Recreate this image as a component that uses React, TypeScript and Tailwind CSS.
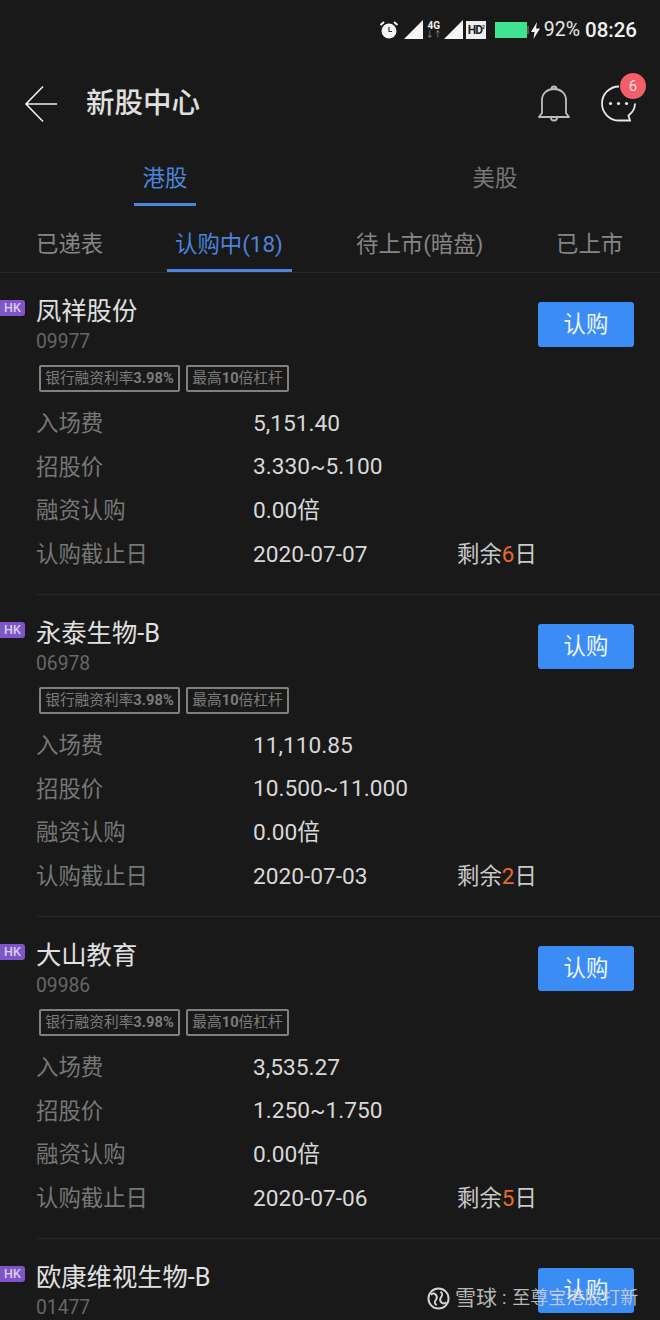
const FONT = "font-['Roboto','Noto_Sans_CJK_SC',sans-serif]";

interface Stock {
  name: string;
  code: string;
  fee?: string;
  price?: string;
  deadline?: string;
  days?: string;
}

const stocks: Stock[] = [
  { name: "凤祥股份", code: "09977", fee: "5,151.40", price: "3.330~5.100", deadline: "2020-07-07", days: "6" },
  { name: "永泰生物-B", code: "06978", fee: "11,110.85", price: "10.500~11.000", deadline: "2020-07-03", days: "2" },
  { name: "大山教育", code: "09986", fee: "3,535.27", price: "1.250~1.750", deadline: "2020-07-06", days: "5" },
  { name: "欧康维视生物-B", code: "01477" },
];

function StatusBar() {
  return (
    <div className="flex h-[60px] items-center justify-end pr-[23px] text-[#f2f2f2]">
      {/* alarm */}
      <svg width="20" height="20" viewBox="0 0 20 20" className="mr-[5px]">
        <circle cx="10" cy="11" r="7.500" fill="#f5f5f5" />
        <path d="M10 7v4.500h3" stroke="#333" strokeWidth="1.200" fill="none" />
        <path d="M1.500 5 5 2M18.500 5 15 2" stroke="#f5f5f5" strokeWidth="2" />
      </svg>
      <svg width="20" height="20" viewBox="0 0 20 20" className="mr-[3px]">
        <path d="M0 19 19 0v19z" fill="#f5f5f5" />
      </svg>
      <div className="mr-[3px] flex w-[14px] flex-col items-center text-[10px] font-bold leading-[10px]">
        <span>4G</span>
        <span className="text-[8px] leading-[8px] text-[#777]">↓↑</span>
      </div>
      <svg width="20" height="20" viewBox="0 0 20 20" className="mr-[2px]">
        <path d="M0 19 19 0v19z" fill="#f5f5f5" />
      </svg>
      <div className="mr-[9px] flex h-[18px] w-[20px] items-start justify-center bg-[#eeeeee] pt-[2px] text-[12px] font-bold leading-[14px] tracking-[-1px] text-[#222]">
        HD<span className="text-[5px] leading-[8px]">2</span>
      </div>
      <div className="h-[16px] w-[32px] bg-[#3ee28f]" />
      <div className="mr-[2px] h-[8px] w-[2px] bg-[#555]" />
      <svg width="9" height="17" viewBox="0 0 9 17" className="mr-[4px]">
        <path d="M6 0 0 10h3.500L2.500 17 9 6.500H5z" fill="#f5f5f5" />
      </svg>
      <span className="mr-[5px] text-[19.5px] text-[#e8e8e8]">92%</span>
      <span className="text-[20.5px] font-medium">08:26</span>
    </div>
  );
}

function Header() {
  return (
    <div className="flex h-[88px] items-center pl-[24px] pr-[22px]">
      <svg width="34" height="38" viewBox="0 0 34 38" fill="none" stroke="#f0f0f0" strokeWidth="1.600">
        <path d="M19 1.500 2 19l17 17.500M2 19h31" />
      </svg>
      <div className="ml-[28px] flex-1 pt-[1px] text-[28.5px] font-medium text-[#e0e0e0]">新股中心</div>
      <svg width="36" height="38" viewBox="0 0 36 38" fill="none" stroke="#bdbdbd" strokeWidth="1.800" className="mr-[28px]">
        <path d="M3 32h30l-3-4V15C30 8.500 25 4 18 4S6 8.500 6 15v13z" strokeLinejoin="round" />
        <path d="M15.500 4a2.500 2.500 0 0 1 5 0M15 33a3 2.500 0 0 0 6 0" />
      </svg>
      <div className="relative">
        <svg width="38" height="38" viewBox="0 0 38 38" fill="none">
          <path d="M19 1.500A17 17 0 1 0 19 35.500h11l-1.500-5c4-3 6.500-6.500 6.500-12" stroke="#e8e8e8" strokeWidth="1.800" />
          <circle cx="10.500" cy="18.500" r="1.600" fill="#e8e8e8" />
          <circle cx="18.500" cy="18.500" r="1.600" fill="#e8e8e8" />
          <circle cx="26.500" cy="18.500" r="1.600" fill="#e8e8e8" />
        </svg>
        <div className="absolute left-[20px] top-[-12px] flex h-[26px] w-[26px] items-center justify-center rounded-full bg-[#f25f68] text-[15px] text-[#f6dcdc]">
          6
        </div>
      </div>
    </div>
  );
}

function Tabs() {
  return (
    <div>
      <div className="flex h-[58px]">
        <div className="flex w-[330px] justify-center">
          <div className="flex h-[58px] w-[62px] flex-col items-center justify-between pt-[14px] text-[22.4px] leading-[32px] text-[#4a84dd]">
            <span>港股</span>
            <div className="h-[3px] w-full bg-[#4a84dd]" />
          </div>
        </div>
        <div className="flex w-[330px] justify-center pt-[14px] text-[22.4px] leading-[32px] text-[#777777]">美股</div>
      </div>
      <div className="flex h-[67px] border-b border-[#262626] pl-[36px] pt-[22px] text-[22.4px] leading-[32px] text-[#858585]">
        <span className="w-[139px]">已递表</span>
        <div className="relative mr-[73px] w-[108px] text-[#4a84dd]">
          <span className="whitespace-nowrap">认购中(18)</span>
          <div className="absolute bottom-0 left-[-8px] h-[3px] w-[125px] bg-[#4a84dd]" />
        </div>
        <span className="w-[200px] whitespace-nowrap">待上市(暗盘)</span>
        <span className="whitespace-nowrap">已上市</span>
      </div>
    </div>
  );
}

function InfoRow({ label, value, children }: { label: string; value?: string; children?: React.ReactNode }) {
  return (
    <div className="flex h-[43.6px] items-center text-[22.4px]">
      <span className="w-[217px] text-[#777777]">{label}</span>
      <span className="w-[204px] text-[22.7px] text-[#d8d8d8]">{value}</span>
      {children}
    </div>
  );
}

function StockCard({ stock }: { stock: Stock }) {
  return (
    <div className="relative pl-[36px]">
      <div className="absolute left-0 top-[27px] flex h-[16px] w-[25px] items-center justify-center rounded-r-[3px] bg-[#7f55c9] text-[12.5px] font-medium text-[#d9d0ee]">
        HK
      </div>
      <div className="h-[322px] border-b border-[#262626] pr-[26px]">
        <div className="flex items-start justify-between">
          <div className="pt-[21px]">
            <div className="text-[25.3px] leading-[36px] text-[#e0e0e0]">{stock.name}</div>
            <div className="mt-[-1px] text-[19.3px] leading-[26px] text-[#666666]">{stock.code}</div>
          </div>
          <button className="mt-[29px] h-[45px] w-[96px] rounded-[3px] bg-[#3b8df5] text-[22.4px] text-[#eef5ff]">认购</button>
        </div>
        {stock.fee ? (
          <>
            <div className="ml-[3px] mt-[10px] flex gap-[6px]">
              <div className="flex h-[27px] w-[141px] items-center justify-center whitespace-nowrap rounded-[2px] border-2 border-[#808080] text-[14.7px] text-[#7c7c7c]">
                银行融资利率<b>3.98%</b>
              </div>
              <div className="flex h-[27px] w-[103px] items-center justify-center whitespace-nowrap rounded-[2px] border-2 border-[#808080] text-[14.7px] text-[#7c7c7c]">
                最高<b>10</b>倍杠杆
              </div>
            </div>
            <div className="mt-[10px]">
              <InfoRow label="入场费" value={stock.fee} />
              <InfoRow label="招股价" value={stock.price} />
              <InfoRow label="融资认购" value="0.00倍" />
              <InfoRow label="认购截止日" value={stock.deadline}>
                <span className="whitespace-nowrap text-[#c8c8c8]">
                  剩余<span className="text-[#ea6a2c]">{stock.days}</span>日
                </span>
              </InfoRow>
            </div>
          </>
        ) : null}
      </div>
    </div>
  );
}

export default function App() {
  return (
    <div className={`relative h-[1320px] w-[660px] overflow-hidden bg-[#191919] ${FONT}`}>
      <StatusBar />
      <Header />
      <Tabs />
      {stocks.map((stock) => (
        <StockCard key={stock.code} stock={stock} />
      ))}
      {/* watermark */}
      <div className="absolute left-[427px] top-[1286px] flex h-[24px] items-center text-[18px] leading-[24px] text-[#d6d6d6]/85">
        <svg width="23" height="23" viewBox="0 0 24 24" fill="none" stroke="#d6d6d6" strokeWidth="2">
          <circle cx="12" cy="12" r="10.500" />
          <path d="M4 8c4-3 7 1 6 4s-4 4 0 7M20 16c-4 3-7-1-6-4s4-4 0-7" />
        </svg>
        <span className="ml-[5px] whitespace-nowrap text-[21px]">雪球</span>
        <span className="ml-[5px] mr-[6px]">:</span>
        <span className="whitespace-nowrap">至尊宝港股打新</span>
      </div>
    </div>
  );
}
